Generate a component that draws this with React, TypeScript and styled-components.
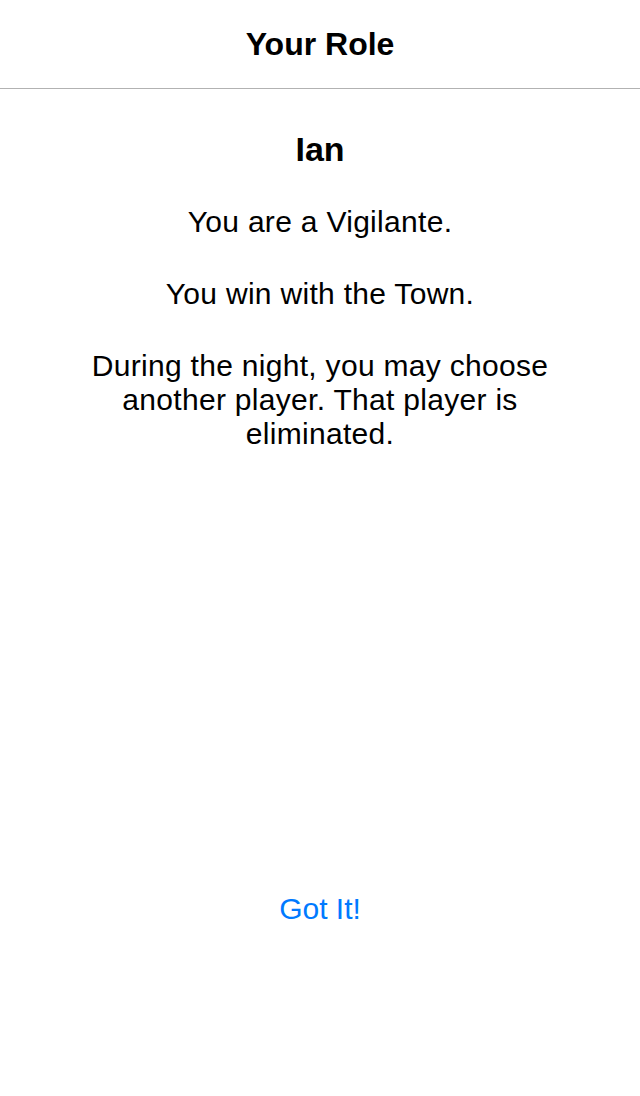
import React from "react";
import styled, { createGlobalStyle } from "styled-components";

const Global = createGlobalStyle`
  html, body { margin: 0; padding: 0; background: #ffffff; }
  body { font-family: "Liberation Sans", Arial, Helvetica, sans-serif; color: #000; }
  * { box-sizing: border-box; }
`;

const Screen = styled.div`
  display: flex;
  flex-direction: column;
  min-height: 1096px;
  background: #ffffff;
`;

const NavBar = styled.header`
  height: 89px;
  display: flex;
  align-items: center;
  justify-content: center;
  border-bottom: 1px solid #b2b2b2;
`;

const NavTitle = styled.h1`
  margin: 0;
  font-size: 32px;
  font-weight: 700;
  line-height: 40px;
`;

const Content = styled.main`
  flex: 1;
  display: flex;
  flex-direction: column;
  align-items: center;
  padding: 40px 80px 169px;
`;

const PlayerName = styled.h2`
  margin: 0 0 36px;
  font-size: 34px;
  font-weight: 700;
  line-height: 40px;
  text-align: center;
`;

const Paragraph = styled.p`
  margin: 0 0 38px;
  font-size: 30px;
  letter-spacing: 0.3px;
  line-height: 34px;
  text-align: center;
  width: 480px;
`;

const ActionButton = styled.button`
  margin-top: auto;
  border: none;
  background: transparent;
  padding: 0;
  color: #007aff;
  font-family: "Liberation Sans", Arial, Helvetica, sans-serif;
  font-size: 30px;
  line-height: 36px;
  cursor: pointer;
`;

export default function App() {
  return (
    <>
      <Global />
      <Screen>
        <NavBar>
          <NavTitle>Your Role</NavTitle>
        </NavBar>
        <Content>
          <PlayerName>Ian</PlayerName>
          <Paragraph>You are a Vigilante.</Paragraph>
          <Paragraph>You win with the Town.</Paragraph>
          <Paragraph>
            During the night, you may choose another player. That player is
            eliminated.
          </Paragraph>
          <ActionButton>Got It!</ActionButton>
        </Content>
      </Screen>
    </>
  );
}
